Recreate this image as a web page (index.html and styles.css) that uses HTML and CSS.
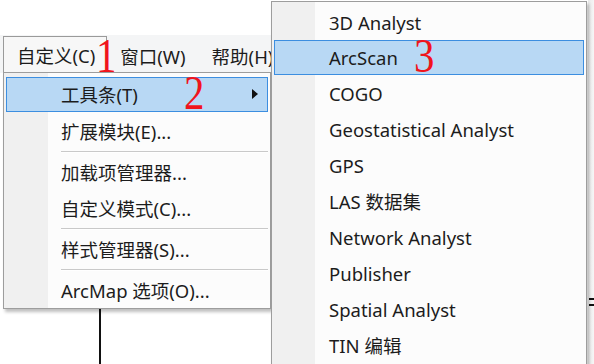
FILE: index.html
```html
<!DOCTYPE html>
<html lang="zh-CN">
<head>
    <meta charset="UTF-8">
    <meta name="viewport" content="width=device-width, initial-scale=1.0">
    <title>ArcMap 自定义菜单</title>
    <link rel="stylesheet" href="styles.css">
</head>
<body>
    <div class="screen">
        <div class="top-space"></div>

        <!-- Main menu bar -->
        <div class="menubar">
            <span class="bar-item open">自定义(C)</span>
            <span class="bar-item">窗口(W)</span>
            <span class="bar-item">帮助(H)</span>
        </div>

        <!-- bits of the map window behind the menus -->
        <div class="bg-line"></div>
        <div class="bg-mark"></div>

        <!-- 自定义 dropdown -->
        <div class="menu main-menu">
            <div class="item active">工具条(T)<span class="arrow"></span></div>
            <div class="item">扩展模块(E)...</div>
            <div class="sep"></div>
            <div class="item">加载项管理器...</div>
            <div class="item">自定义模式(C)...</div>
            <div class="sep"></div>
            <div class="item">样式管理器(S)...</div>
            <div class="sep"></div>
            <div class="item">ArcMap 选项(O)...</div>
        </div>

        <!-- 工具条 submenu -->
        <div class="menu sub-menu">
            <div class="item">3D Analyst</div>
            <div class="item active">ArcScan</div>
            <div class="item">COGO</div>
            <div class="item">Geostatistical Analyst</div>
            <div class="item">GPS</div>
            <div class="item">LAS 数据集</div>
            <div class="item">Network Analyst</div>
            <div class="item">Publisher</div>
            <div class="item">Spatial Analyst</div>
            <div class="item">TIN 编辑</div>
        </div>

        <!-- red step numbers -->
        <span class="step step-1">1</span>
        <span class="step step-2">2</span>
        <span class="step step-3">3</span>
    </div>
</body>
</html>
```

FILE: styles.css
```css
html, body {
    margin: 0;
    padding: 0;
}
body {
    background: #fff;
    font-family: "Noto Sans", "Noto Sans CJK SC", sans-serif;
    font-size: 18.5px;
    color: #1c1c1c;
}
.screen {
    position: relative;
    width: 594px;
    height: 364px;
    overflow: hidden;
    background: linear-gradient(to right, #fff 0 588px, #e9e9e9 588px, #f6f6f6 594px);
}
.top-space {
    height: 35px;
}
.menubar {
    display: flex;
    width: 272px;
    height: 38px;
    background: #f4f5f6;
    padding-left: 3px;
    box-sizing: border-box;
}
.bar-item {
    display: flex;
    align-items: center;
    padding: 0 13px;
    height: 35px;
    margin-top: 3px;
    white-space: nowrap;
    box-sizing: border-box;
}
.bar-item.open {
    border: 1px solid #9a9a9a;
    border-bottom: 0;
    background: #f7f7f7;
    padding-left: 13px;
    padding-right: 11px;
    height: 37px;
    margin-top: 1px;
}

.bg-line {
    position: absolute;
    left: 99px;
    top: 300px;
    width: 2px;
    height: 70px;
    background: #111;
}
.bg-mark {
    position: absolute;
    left: 589px;
    top: 298px;
    width: 6px;
    height: 4px;
    border-top: 2px solid #111;
    border-bottom: 2px solid #111;
}

.menu {
    position: absolute;
    border: 1px solid #9d9d9d;
    box-sizing: border-box;
    box-shadow: 2px 3px 3px rgba(0, 0, 0, 0.25);
}
.item {
    position: relative;
    height: 36px;
    line-height: 36px;
    margin: 0 2px;
    padding-left: 54px;
    border: 1px solid transparent;
    box-sizing: border-box;
    white-space: nowrap;
}
.item.active {
    background: #b8d8f4;
    border-color: #3c8ee0;
    height: 35px;
    line-height: 33px;
}
.sep {
    height: 1px;
    margin: 2px 2px 1px 57px;
    background: #c9c9c9;
    border-bottom: 1px solid #fff;
}

.main-menu {
    left: 3px;
    top: 72px;
    width: 268px;
    height: 237px;
    padding-top: 4px;
    background: linear-gradient(to right, #f0f0f0 0 44px, #fcfcfc 44px);
    z-index: 1;
}
.main-menu .item.active {
    margin-bottom: 1px;
}
.arrow {
    position: absolute;
    right: 9px;
    top: 11px;
    width: 0;
    height: 0;
    border-top: 5px solid transparent;
    border-bottom: 5px solid transparent;
    border-left: 6px solid #111;
}

.sub-menu {
    left: 271px;
    top: 1px;
    width: 316px;
    height: 380px;
    padding-top: 2px;
    background: linear-gradient(to right, #f0f0f0 0 43px, #fcfcfc 43px);
    z-index: 2;
}

.step {
    position: absolute;
    font-family: "Liberation Serif", serif;
    font-size: 48px;
    line-height: 1;
    color: #f0141c;
    z-index: 3;
    transform: scaleX(0.85);
    transform-origin: left top;
}
.step-1 {
    left: 96px;
    top: 32px;
}
.step-2 {
    left: 184px;
    top: 69px;
}
.step-3 {
    left: 414px;
    top: 32px;
}
```
